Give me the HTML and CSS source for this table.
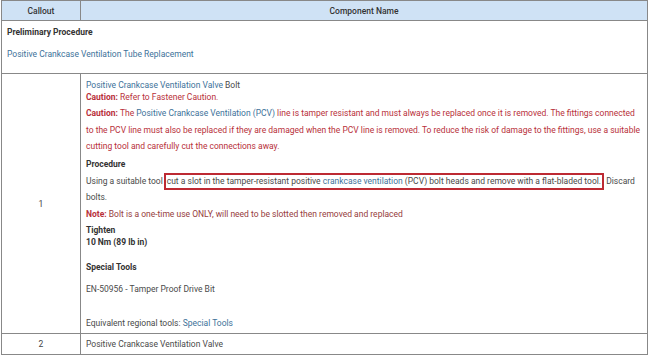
FILE: index.html
```html
<!DOCTYPE html>
<html>
<head>
<meta charset="utf-8">
<link rel="stylesheet" href="styles.css">
</head>
<body>
<table class="grid">
  <thead>
    <tr>
      <th class="col-callout">Callout</th>
      <th class="col-name">Component Name</th>
    </tr>
  </thead>
  <tbody>
    <tr class="row-pre">
      <td colspan="2" class="cell-pre">
        <div class="h">Preliminary Procedure</div>
        <div class="link pre-link">Positive Crankcase Ventilation Tube Replacement</div>
      </td>
    </tr>
    <tr class="row-main">
      <td class="num">1</td>
      <td class="content">
        <div class="tight"><span class="link">Positive Crankcase Ventilation Valve</span> Bolt</div>
        <div class="tight red"><b>Caution:</b> Refer to Fastener Caution.</div>
        <p class="para red caution"><b>Caution:</b> The <span class="link">Positive Crankcase Ventilation (PCV)</span> line is tamper resistant and must always be replaced once it is removed. The fittings connected to the PCV line must also be replaced if they are damaged when the PCV line is removed. To reduce the risk of damage to the fittings, use a suitable cutting tool and carefully cut the connections away.</p>
        <div class="h proc">Procedure</div>
        <p class="para using">Using a suitable tool<span class="box">cut a slot in the tamper-resistant positive <span class="link">crankcase ventilation</span> (PCV) bolt heads and remove with a flat-bladed tool.</span> Discard bolts.</p>
        <p class="para note"><b>Note:</b> Bolt is a one-time use ONLY, will need to be slotted then removed and replaced</p>
        <div class="h tighten">Tighten</div>
        <div class="h">10 Nm (89 lb in)</div>
        <div class="h special">Special Tools</div>
        <div class="tight en">EN-50956 - Tamper Proof Drive Bit</div>
        <div class="tight equiv">Equivalent regional tools: <span class="link">Special Tools</span></div>
      </td>
    </tr>
    <tr class="row-last">
      <td class="num">2</td>
      <td class="content last">Positive Crankcase Ventilation Valve</td>
    </tr>
  </tbody>
</table>
</body>
</html>
```

FILE: styles.css
```css
html, body {
  margin: 0;
  padding: 0;
  background: #ffffff;
}
body {
  font-family: Roboto, "Liberation Sans", sans-serif;
  font-size: 8.5px;
  color: #4a4a4a;
  line-height: 12px;
}
.grid {
  margin-left: 1px;
  width: 647px;
  border-collapse: collapse;
  border: 1px solid #888888;
}
.grid th {
  background: #cfe2f5;
  color: #333333;
  font-weight: 500;
  height: 19px;
  padding: 0;
  text-align: center;
  border: 1px solid #888888;
  border-top: none;
}
.col-callout {
  width: 78px;
}
.grid td {
  border: 1px solid #888888;
  padding: 0;
  vertical-align: top;
}
.cell-pre {
  padding: 5px 5px 13px 5px !important;
  height: 34px;
}
.h {
  font-weight: 700;
  color: #333333;
}
.pre-link {
  margin-top: 10px;
}
.link {
  color: #40729a;
}
.red {
  color: #b8303a;
}
.num {
  text-align: center;
  vertical-align: middle !important;
  color: #444444;
}
.content {
  padding: 5px 6px 4px 5px !important;
}
.para {
  margin: 0;
  line-height: 16.5px;
}
.caution {
  margin-top: 2px;
}
.proc {
  margin-top: 3px;
}
.using {
  margin-top: 3px;
}
.box {
  border: 2px solid #bd2a33;
  padding: 1px 1px 2px 1px;
  margin-left: 1px;
}
.note {
  color: #963c3c;
}
.note b {
  color: #b8303a;
}
.tighten {
  margin-top: 2px;
}
.special {
  margin-top: 13px;
}
.en {
  margin-top: 10px;
}
.equiv {
  margin-top: 22px;
}
.row-last td {
  height: 20px;
  vertical-align: middle;
}
.content.last {
  padding: 0 5px !important;
  vertical-align: middle;
}
```
